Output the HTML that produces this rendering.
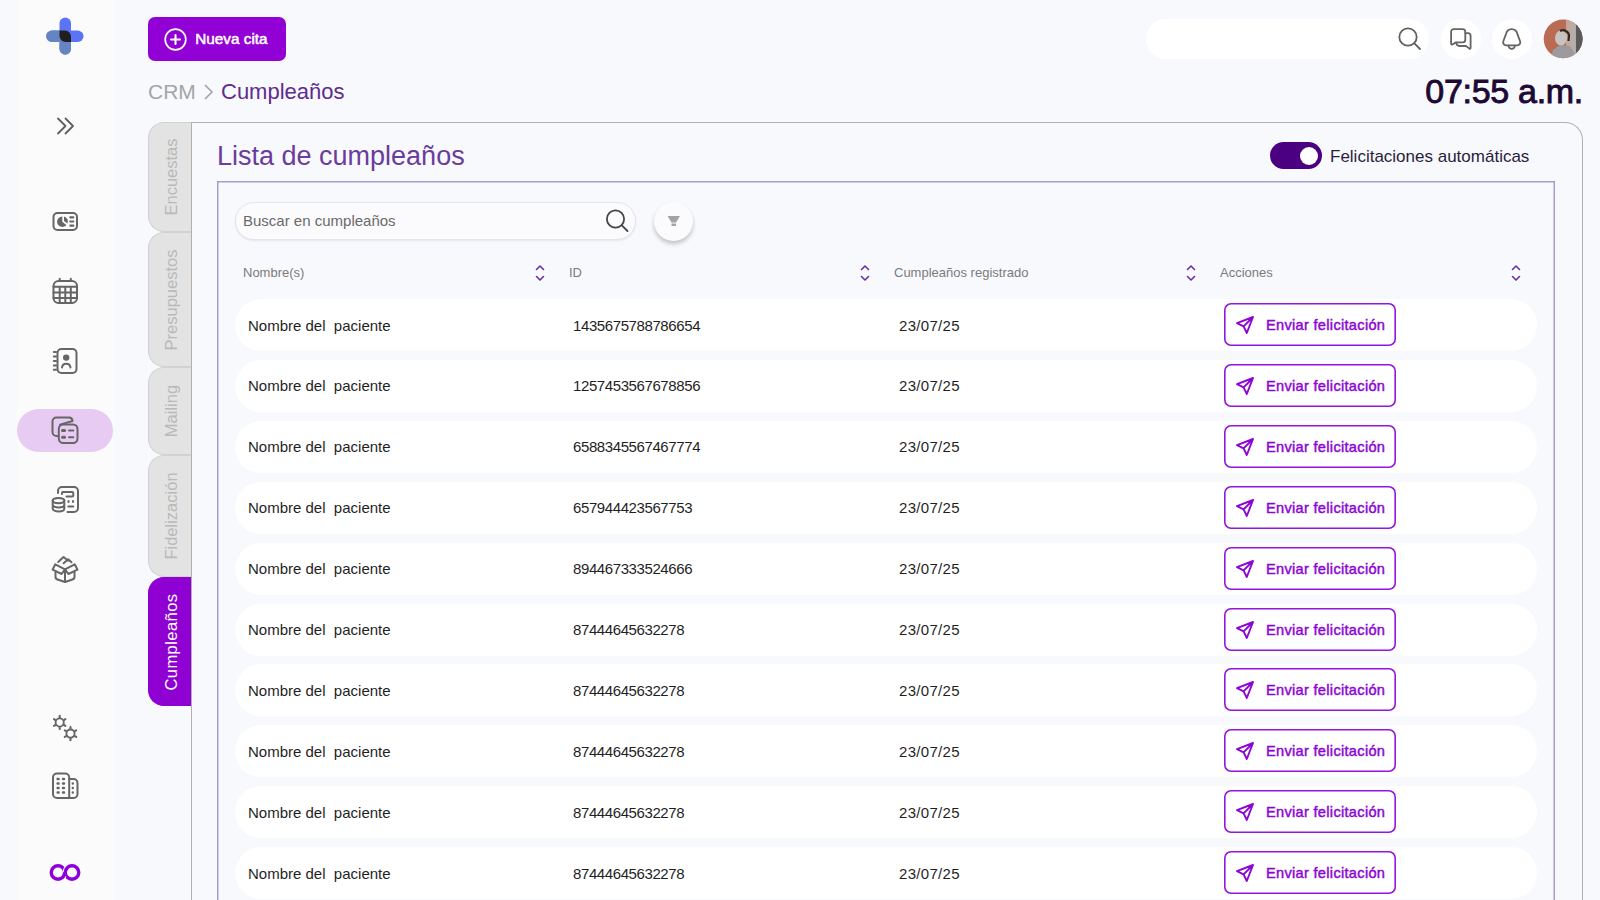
<!DOCTYPE html>
<html><head><meta charset="utf-8">
<style>
*{margin:0;padding:0;box-sizing:border-box}
html,body{width:1600px;height:900px;overflow:hidden;background:#f7f9fd;font-family:"Liberation Sans",sans-serif;position:relative}
.abs{position:absolute}
#sidebar{position:absolute;left:17px;top:0;width:96px;height:900px;background:#fbfbfc}
.ico{position:absolute;left:0;width:130px}
svg{display:block;overflow:visible}
#newbtn{position:absolute;left:148px;top:17px;width:138px;height:44px;background:#9100d5;border-radius:7px}
#newbtn span{position:absolute;left:197px;top:0;color:#fff}
.crumb{position:absolute;white-space:pre}
.tab{position:absolute;left:148px;width:43px;background:#e3e3e3;border:1px solid #d2d2d2;border-right:none;border-radius:16px 0 0 16px}
.tt{position:absolute;left:171.25px;white-space:pre;transform:translate(-50%,-50%) rotate(-90deg);font-size:16.5px;line-height:16.5px}
#card{position:absolute;left:191px;top:122px;width:1392px;height:800px;border:1px solid #b0b0b0;border-radius:0 18px 0 0;border-bottom:none}
#box{position:absolute;left:217px;top:180.5px;width:1338px;height:740px;box-shadow:inset 0 0 0 1.5px #ab9bcb}
.row{position:absolute;left:235px;width:1302px;height:52px;background:#fff;border-radius:26px}
.row .t{position:absolute;top:0.5px;line-height:52px;font-size:15px;color:#1f1f1f;white-space:pre}
.btn{position:absolute;left:989px;top:4px;width:172px;height:43px;box-shadow:inset 0 0 0 1.6px #9415dc;border-radius:7px;background:#fff}
.btn span{position:absolute;left:42px;top:2px;line-height:41px;font-size:14.6px;font-weight:400;color:#8c05d4;white-space:pre;letter-spacing:0.3px;-webkit-text-stroke:0.45px #8c05d4}
.btn svg{position:absolute;left:11px;top:12px}
.hd{position:absolute;top:265px;font-size:13px;color:#7b7b7b;white-space:pre;line-height:16px}
.sort{position:absolute;top:264px}
</style></head><body>

<div id="sidebar"></div>

<!-- logo -->
<svg class="abs" style="left:46px;top:17.2px" width="38" height="38" viewBox="0 0 38 38">
  <rect x="13.5" y="0.5" width="11.5" height="37" rx="5.75" fill="#5b74f5"/>
  <rect x="0.5" y="13.5" width="37" height="11.5" rx="5.75" fill="#5b74f5"/>
  <path d="M5.75 13.5 H19 V25 H5.75 A5.75 5.75 0 0 1 5.75 13.5 Z" fill="#6585c2"/>
  <path d="M13.5 19 V32 A5.75 5.75 0 0 0 25 32 V25 H19 Z" fill="#6585c2"/>
  <path d="M13.5 13.5 H19 A6 6 0 0 1 25 19.5 V25 H19.5 A6 6 0 0 1 13.5 19 Z" fill="#1f1f22"/>
</svg>

<!-- chevrons -->
<svg class="abs" style="left:56px;top:117px" width="20" height="18" viewBox="0 0 20 18">
  <path d="M2 1.5 L9.5 9 L2 16.5 M9.5 1.5 L17 9 L9.5 16.5" fill="none" stroke="#5f5f5f" stroke-width="1.8" stroke-linecap="round" stroke-linejoin="round"/>
</svg>

<!-- active pill -->
<div class="abs" style="left:17px;top:409px;width:96px;height:43px;border-radius:22px;background:#e8cbf3"></div>
<!-- sidebar icons -->
<svg class="abs" style="left:0;top:0" width="130" height="900" viewBox="0 0 130 900">
 <g fill="none" stroke="#666" stroke-width="2" stroke-linecap="round" stroke-linejoin="round">
  <!-- dashboard -->
  <rect x="53.5" y="213" width="23.5" height="17" rx="4"/>
  <path d="M62.3 216.5 A5.2 5.2 0 1 0 66.4 224.9 L62.3 221.7 Z" fill="#666" stroke="none"/>
  <path d="M64 216.6 A5.2 5.2 0 0 1 67.6 223.6 L64 220.9 Z" fill="#666" stroke="none"/>
  <path d="M70.3 217.3 H73.3 M70.3 221.5 H73.3 M70.3 225.7 H73.3" stroke-width="2.2"/>
  <!-- calendar -->
  <rect x="53.5" y="281" width="23.5" height="22" rx="5"/>
  <path d="M53.5 286.8 H77 M53.5 292.4 H77 M53.5 298 H77 M59.7 286.8 V303 M65.3 286.8 V303 M70.8 286.8 V303 M59.7 278.8 V281 M70.8 278.8 V281"/>
  <!-- contacts -->
  <rect x="57.5" y="349" width="19" height="24" rx="4"/>
  <path d="M53.8 352 H56 M53.8 356.5 H56 M53.8 361 H56 M53.8 365.4 H56 M53.8 369.8 H56"/>
  <circle cx="66.2" cy="357.6" r="3.2" fill="#666" stroke="none"/>
  <path d="M62 367.5 A4.3 4.3 0 0 1 70.5 367.5"/>
  <!-- active: cards -->
  <path d="M58 436 H56.5 A4 4 0 0 1 52.5 432 V421.5 A4 4 0 0 1 56.5 417.5 H69 A3.6 3.6 0 0 1 72.5 421 L60 424.6"/>
  <rect x="58.8" y="424.5" width="18.7" height="18.5" rx="4.5"/>
  <path d="M62.5 430.5 H64.6 M62.5 437.3 H64.6" stroke-width="3"/>
  <path d="M69 430.5 H73.3 M69 437.3 H73.3"/>
  <!-- coins calculator -->
  <path d="M58 493 V491 A4 4 0 0 1 62 487 H74 A4 4 0 0 1 78 491 V508 A4 4 0 0 1 74 512 H67.5"/>
  <path d="M62 494 V493 A1 1 0 0 1 63 492 H72 A1.3 1.3 0 0 1 73.3 493.3 V495 A1.5 1.5 0 0 1 71.8 496.5 H66.5"/>
  <path d="M68.5 501 V502 M73 501 V502 M68.3 506.5 H73.3"/>
  <ellipse cx="58.5" cy="500.6" rx="5.8" ry="2.6"/>
  <path d="M52.7 500.6 V508.8 A5.8 2.6 0 0 0 64.3 508.8 V500.6 M52.7 504.8 A5.8 2.6 0 0 0 64.3 504.8"/>
  <!-- box -->
  <path d="M55.5 572.5 V576.5 A3 3 0 0 0 57.5 579.5 L65 582 L72.5 579.5 A3 3 0 0 0 74.5 576.5 V572.5 M65 569.5 V582"/>
  <path d="M55.3 564.3 L65 569.3 L61.6 574 L52.6 569.6 Z M65 569.3 L74.7 564.3 L77.5 569.6 L68.4 574 Z"/>
  <path d="M58.2 562 L63.5 557 L68.2 560.7 M63.6 563.3 L68.2 559.3 L71.5 562.3"/>
  <!-- gears -->
  <circle cx="59.7" cy="722.5" r="4.1" stroke-width="1.9"/>
  <path d="M59.70 727.50 L59.70 729.10 M59.70 717.50 L59.70 715.90 M64.03 725.00 L65.42 725.80 M55.37 725.00 L53.98 725.80 M55.37 720.00 L53.98 719.20 M64.03 720.00 L65.42 719.20 " stroke-width="2.1"/>
  <circle cx="70.5" cy="733.6" r="4.1" stroke-width="1.9"/>
  <path d="M70.50 738.60 L70.50 740.20 M70.50 728.60 L70.50 727.00 M74.83 736.10 L76.22 736.90 M66.17 736.10 L64.78 736.90 M66.17 731.10 L64.78 730.30 M74.83 731.10 L76.22 730.30 " stroke-width="2.1"/>
  <!-- building -->
  <path d="M69.2 798 H57 A4 4 0 0 1 53 794 V777.5 A4 4 0 0 1 57 773.5 H65.2 A4 4 0 0 1 69.2 777.5 Z"/>
  <path d="M69.2 779 H73.5 A4 4 0 0 1 77.5 783 V794 A4 4 0 0 1 73.5 798 H69.2"/>
  <path d="M57.6 779 H58.6 M63 779 H64 M57.6 783.5 H58.6 M63 783.5 H64 M57.6 788 H58.6 M63 788 H64 M57.6 792.5 H58.6 M63 792.5 H64 M72.8 783.5 V783.6 M72.8 788 V788.1 M72.8 792.5 V792.6" stroke-width="2.4"/>
 </g>
 <!-- infinity -->
 <g fill="none" stroke-width="3.4">
  <circle cx="58" cy="872.45" r="6.75" stroke="#8e00d8"/>
  <path d="M65.25 872.45 A6.75 6.75 0 0 1 72 865.7" stroke="#fbfbfd" stroke-width="5.2"/>
  <circle cx="72" cy="872.45" r="6.75" stroke="#8e00d8"/>
  <path d="M64.1 875.3 A6.75 6.75 0 0 1 58 879.2" stroke="#fbfbfd" stroke-width="5.2"/>
  <path d="M64.75 872.45 A6.75 6.75 0 0 1 58 879.2" stroke="#8e00d8"/>
 </g>
</svg>


<!-- top button -->
<div id="newbtn">
  <svg class="abs" style="left:16px;top:11px" width="23" height="23" viewBox="0 0 23 23">
    <circle cx="11.5" cy="11.5" r="10.3" fill="none" stroke="#fff" stroke-width="1.7"/>
    <path d="M11.5 7 V16 M7 11.5 H16" stroke="#fff" stroke-width="2.1" stroke-linecap="round"/>
  </svg>
  <span style="left:47.3px;top:0;line-height:44px;font-size:15.3px;font-weight:400;color:#fff;position:absolute;white-space:pre;-webkit-text-stroke:0.5px #fff">Nueva cita</span>
</div>

<!-- breadcrumb -->
<div class="crumb" style="left:148px;top:78px;font-size:21px;line-height:28px;color:#a5a5a5">CRM</div>
<svg class="abs" style="left:203px;top:84px" width="12" height="16" viewBox="0 0 12 16">
  <path d="M2.5 1.5 L9 8 L2.5 14.5" fill="none" stroke="#a5a5a5" stroke-width="1.7" stroke-linecap="round" stroke-linejoin="round"/>
</svg>
<div class="crumb" style="left:221px;top:78px;font-size:22px;line-height:28px;color:#5f2b8f">Cumpleaños</div>

<!-- top right -->
<div class="abs" style="left:1146px;top:19px;width:283px;height:40px;border-radius:20px;background:#fff"></div>
<svg class="abs" style="left:1396px;top:25px" width="28" height="28" viewBox="0 0 28 28">
  <circle cx="12" cy="12" r="8.7" fill="none" stroke="#606060" stroke-width="1.8"/>
  <path d="M18.4 18.4 L24 24" stroke="#606060" stroke-width="1.8" stroke-linecap="round"/>
</svg>
<div class="abs" style="left:1441px;top:19px;width:40px;height:40px;border-radius:50%;background:#fff"></div>
<div class="abs" style="left:1492px;top:19px;width:40px;height:40px;border-radius:50%;background:#fff"></div>
<svg class="abs" style="left:0;top:0" width="1600" height="70" viewBox="0 0 1600 70">
 <g fill="none" stroke="#646464" stroke-width="1.8" stroke-linejoin="round" stroke-linecap="round">
  <path d="M1455.9 42.4 H1462.7 A2.6 2.6 0 0 0 1465.3 39.8 V31.7 A2.6 2.6 0 0 0 1462.7 29.1 H1453.7 A2.6 2.6 0 0 0 1451.1 31.7 V43.8 A0.8 0.8 0 0 0 1452.3 44.5 Z"/>
  <path d="M1465.3 33.2 H1468 A2.6 2.6 0 0 1 1470.6 35.8 V47.9 A0.8 0.8 0 0 1 1469.4 48.6 L1466 46 H1459.6 A3.2 3.2 0 0 1 1456.4 42.8"/>
  <path d="M1511.7 29.1 C1508.3 29.1 1506.4 31.6 1505.8 34.6 L1503.3 41.3 C1502.7 43.3 1503.8 45.3 1506 45.3 H1517.4 C1519.6 45.3 1520.7 43.3 1520.1 41.3 L1517.6 34.6 C1517 31.6 1515.1 29.1 1511.7 29.1 Z"/>
  <path d="M1508.4 45.6 A3.3 3.3 0 0 0 1515 45.6"/>
 </g>
 <defs><clipPath id="avc"><circle cx="1563.1" cy="38.85" r="19.4"/></clipPath>
 <linearGradient id="avg" x1="0" y1="0" x2="1" y2="0"><stop offset="0" stop-color="#c9a595"/><stop offset="0.5" stop-color="#b5b0ad"/><stop offset="1" stop-color="#4a4a4a"/></linearGradient></defs>
 <g clip-path="url(#avc)">
  <rect x="1543" y="19" width="41" height="41" fill="#bb6b52"/>
  <rect x="1566" y="19" width="18" height="41" fill="url(#avg)"/>
  <rect x="1576" y="19" width="8" height="41" fill="#5a5a5a"/>
  <path d="M1550 60 L1553 50 L1560 45 L1570 46 L1574 52 L1576 60 Z" fill="#9c9a9c"/>
  <ellipse cx="1561" cy="38" rx="6" ry="7.5" fill="#c8c3c0"/>
  <path d="M1560 31 A6 6 0 0 1 1569 35 L1568.5 41" fill="none" stroke="#2a2a2a" stroke-width="2.2"/>
 </g>
</svg>

<div class="crumb" style="right:17px;top:69.5px;font-size:34px;line-height:42px;font-weight:400;color:#1d0933;letter-spacing:-0.3px;-webkit-text-stroke:0.9px #1d0933">07:55 a.m.</div>

<!-- card -->
<div id="card"></div>
<div class="abs" style="left:217px;top:139px;font-size:27px;line-height:34px;color:#6b3c9c;white-space:pre">Lista de cumpleaños</div>
<div class="abs" style="left:1270px;top:142px;width:52px;height:27px;border-radius:14px;background:#4b0082"></div>
<div class="abs" style="left:1300px;top:146.5px;width:18px;height:18px;border-radius:50%;background:#fff"></div>
<div class="abs" style="left:1330px;top:146px;font-size:17px;line-height:22px;color:#2b1d3d;white-space:pre">Felicitaciones automáticas</div>

<div id="box"></div>

<!-- tabs -->
<div class="tab" style="top:122px;height:110px"></div>
<div class="tab" style="top:232px;height:135px"></div>
<div class="tab" style="top:367px;height:88px"></div>
<div class="tab" style="top:455px;height:122px"></div>
<div class="tab" style="top:577px;height:129px;background:#8f00d3;border-color:#8f00d3"></div>
<div class="tt" style="top:177.0px;color:#b9b9b9">Encuestas</div>
<div class="tt" style="top:299.5px;color:#b9b9b9">Presupuestos</div>
<div class="tt" style="top:411.0px;color:#b9b9b9">Mailing</div>
<div class="tt" style="top:516.0px;color:#b9b9b9">Fidelización</div>
<div class="tt" style="top:641.5px;color:#fff;letter-spacing:0.45px">Cumpleaños</div>

<!-- search -->
<div class="abs" style="left:235px;top:202px;width:401px;height:38px;border-radius:19px;background:#fbfbfd;border:1px solid #e7e4eb;box-shadow:0 1px 2px rgba(80,60,110,0.10)"></div>
<div class="abs" style="left:243px;top:211px;font-size:15px;line-height:20px;color:#6a6a6a;white-space:pre">Buscar en cumpleaños</div>
<svg class="abs" style="left:603px;top:206px" width="28" height="28" viewBox="0 0 28 28">
  <circle cx="12.5" cy="13" r="8.6" fill="none" stroke="#444" stroke-width="1.8"/>
  <path d="M18.8 19.3 L24.5 25" stroke="#444" stroke-width="1.8" stroke-linecap="round"/>
</svg>
<div class="abs" style="left:654px;top:202px;width:39px;height:39px;border-radius:50%;background:#fbfbfd;box-shadow:0 3px 4px rgba(0,0,0,0.22)"></div>
<svg class="abs" style="left:665px;top:213px" width="18" height="16" viewBox="0 0 18 16">
  <path d="M2.5 3 H15 L11 9.5 H6.5 Z" fill="#a3a3a3"/>
  <rect x="6.5" y="10.5" width="4.5" height="2.5" fill="#a3a3a3"/>
</svg>

<div class="hd" style="left:243px">Nombre(s)</div><div class="sort" style="left:535px"><svg width="10" height="18" viewBox="0 0 10 18"><path d="M1.5 5.5 L5 2 L8.5 5.5 M1.5 12.5 L5 16 L8.5 12.5" fill="none" stroke="#6b2da3" stroke-width="1.6" stroke-linecap="round" stroke-linejoin="round"/></svg></div>
<div class="hd" style="left:569px">ID</div><div class="sort" style="left:860px"><svg width="10" height="18" viewBox="0 0 10 18"><path d="M1.5 5.5 L5 2 L8.5 5.5 M1.5 12.5 L5 16 L8.5 12.5" fill="none" stroke="#6b2da3" stroke-width="1.6" stroke-linecap="round" stroke-linejoin="round"/></svg></div>
<div class="hd" style="left:894px">Cumpleaños registrado</div><div class="sort" style="left:1186px"><svg width="10" height="18" viewBox="0 0 10 18"><path d="M1.5 5.5 L5 2 L8.5 5.5 M1.5 12.5 L5 16 L8.5 12.5" fill="none" stroke="#6b2da3" stroke-width="1.6" stroke-linecap="round" stroke-linejoin="round"/></svg></div>
<div class="hd" style="left:1220px">Acciones</div><div class="sort" style="left:1511px"><svg width="10" height="18" viewBox="0 0 10 18"><path d="M1.5 5.5 L5 2 L8.5 5.5 M1.5 12.5 L5 16 L8.5 12.5" fill="none" stroke="#6b2da3" stroke-width="1.6" stroke-linecap="round" stroke-linejoin="round"/></svg></div>
<div class="row" style="top:299.0px"><div class="t" style="left:13px">Nombre del&nbsp; paciente</div><div class="t" style="left:338px;letter-spacing:-0.4px">1435675788786654</div><div class="t" style="left:664px;letter-spacing:0.3px">23/07/25</div><div class="btn"><svg width="20" height="20" viewBox="0 0 20 20"><path d="M18 2 L2 8.2 L8.6 11.4 L11.8 18 Z M18 2 L8.6 11.4" fill="none" stroke="#8c05d4" stroke-width="1.9" stroke-linejoin="round" stroke-linecap="round"/></svg><span>Enviar felicitación</span></div></div>
<div class="row" style="top:359.9px"><div class="t" style="left:13px">Nombre del&nbsp; paciente</div><div class="t" style="left:338px;letter-spacing:-0.4px">1257453567678856</div><div class="t" style="left:664px;letter-spacing:0.3px">23/07/25</div><div class="btn"><svg width="20" height="20" viewBox="0 0 20 20"><path d="M18 2 L2 8.2 L8.6 11.4 L11.8 18 Z M18 2 L8.6 11.4" fill="none" stroke="#8c05d4" stroke-width="1.9" stroke-linejoin="round" stroke-linecap="round"/></svg><span>Enviar felicitación</span></div></div>
<div class="row" style="top:420.8px"><div class="t" style="left:13px">Nombre del&nbsp; paciente</div><div class="t" style="left:338px;letter-spacing:-0.4px">6588345567467774</div><div class="t" style="left:664px;letter-spacing:0.3px">23/07/25</div><div class="btn"><svg width="20" height="20" viewBox="0 0 20 20"><path d="M18 2 L2 8.2 L8.6 11.4 L11.8 18 Z M18 2 L8.6 11.4" fill="none" stroke="#8c05d4" stroke-width="1.9" stroke-linejoin="round" stroke-linecap="round"/></svg><span>Enviar felicitación</span></div></div>
<div class="row" style="top:481.7px"><div class="t" style="left:13px">Nombre del&nbsp; paciente</div><div class="t" style="left:338px;letter-spacing:-0.4px">657944423567753</div><div class="t" style="left:664px;letter-spacing:0.3px">23/07/25</div><div class="btn"><svg width="20" height="20" viewBox="0 0 20 20"><path d="M18 2 L2 8.2 L8.6 11.4 L11.8 18 Z M18 2 L8.6 11.4" fill="none" stroke="#8c05d4" stroke-width="1.9" stroke-linejoin="round" stroke-linecap="round"/></svg><span>Enviar felicitación</span></div></div>
<div class="row" style="top:542.6px"><div class="t" style="left:13px">Nombre del&nbsp; paciente</div><div class="t" style="left:338px;letter-spacing:-0.4px">894467333524666</div><div class="t" style="left:664px;letter-spacing:0.3px">23/07/25</div><div class="btn"><svg width="20" height="20" viewBox="0 0 20 20"><path d="M18 2 L2 8.2 L8.6 11.4 L11.8 18 Z M18 2 L8.6 11.4" fill="none" stroke="#8c05d4" stroke-width="1.9" stroke-linejoin="round" stroke-linecap="round"/></svg><span>Enviar felicitación</span></div></div>
<div class="row" style="top:603.5px"><div class="t" style="left:13px">Nombre del&nbsp; paciente</div><div class="t" style="left:338px;letter-spacing:-0.4px">87444645632278</div><div class="t" style="left:664px;letter-spacing:0.3px">23/07/25</div><div class="btn"><svg width="20" height="20" viewBox="0 0 20 20"><path d="M18 2 L2 8.2 L8.6 11.4 L11.8 18 Z M18 2 L8.6 11.4" fill="none" stroke="#8c05d4" stroke-width="1.9" stroke-linejoin="round" stroke-linecap="round"/></svg><span>Enviar felicitación</span></div></div>
<div class="row" style="top:664.4px"><div class="t" style="left:13px">Nombre del&nbsp; paciente</div><div class="t" style="left:338px;letter-spacing:-0.4px">87444645632278</div><div class="t" style="left:664px;letter-spacing:0.3px">23/07/25</div><div class="btn"><svg width="20" height="20" viewBox="0 0 20 20"><path d="M18 2 L2 8.2 L8.6 11.4 L11.8 18 Z M18 2 L8.6 11.4" fill="none" stroke="#8c05d4" stroke-width="1.9" stroke-linejoin="round" stroke-linecap="round"/></svg><span>Enviar felicitación</span></div></div>
<div class="row" style="top:725.3px"><div class="t" style="left:13px">Nombre del&nbsp; paciente</div><div class="t" style="left:338px;letter-spacing:-0.4px">87444645632278</div><div class="t" style="left:664px;letter-spacing:0.3px">23/07/25</div><div class="btn"><svg width="20" height="20" viewBox="0 0 20 20"><path d="M18 2 L2 8.2 L8.6 11.4 L11.8 18 Z M18 2 L8.6 11.4" fill="none" stroke="#8c05d4" stroke-width="1.9" stroke-linejoin="round" stroke-linecap="round"/></svg><span>Enviar felicitación</span></div></div>
<div class="row" style="top:786.2px"><div class="t" style="left:13px">Nombre del&nbsp; paciente</div><div class="t" style="left:338px;letter-spacing:-0.4px">87444645632278</div><div class="t" style="left:664px;letter-spacing:0.3px">23/07/25</div><div class="btn"><svg width="20" height="20" viewBox="0 0 20 20"><path d="M18 2 L2 8.2 L8.6 11.4 L11.8 18 Z M18 2 L8.6 11.4" fill="none" stroke="#8c05d4" stroke-width="1.9" stroke-linejoin="round" stroke-linecap="round"/></svg><span>Enviar felicitación</span></div></div>
<div class="row" style="top:847.1px"><div class="t" style="left:13px">Nombre del&nbsp; paciente</div><div class="t" style="left:338px;letter-spacing:-0.4px">87444645632278</div><div class="t" style="left:664px;letter-spacing:0.3px">23/07/25</div><div class="btn"><svg width="20" height="20" viewBox="0 0 20 20"><path d="M18 2 L2 8.2 L8.6 11.4 L11.8 18 Z M18 2 L8.6 11.4" fill="none" stroke="#8c05d4" stroke-width="1.9" stroke-linejoin="round" stroke-linecap="round"/></svg><span>Enviar felicitación</span></div></div>

</body></html>
